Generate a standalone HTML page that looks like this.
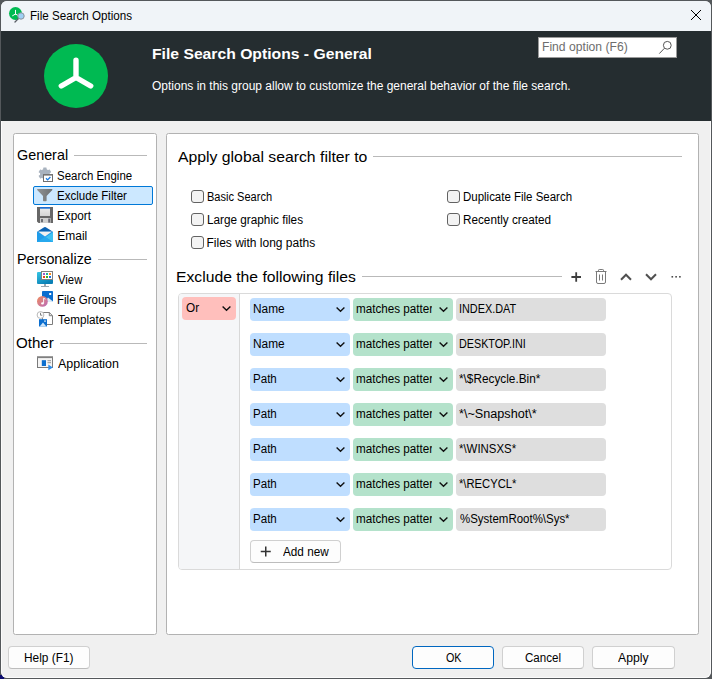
<!DOCTYPE html>
<html lang="en"><head><meta charset="utf-8"><title>File Search Options</title>
<style>
html,body{margin:0;padding:0}
body{width:712px;height:679px;position:relative;overflow:hidden;background:#54585b;font-family:'Liberation Sans',sans-serif;font-size:12px;color:#000}
.a{position:absolute;box-sizing:border-box}
.t{position:absolute;white-space:pre;line-height:20px;transform-origin:0 0;display:block}
.win{left:1px;top:1px;width:710px;height:677px;border-radius:6px;overflow:hidden;background:#f0f0f0}
.titlebar{left:0;top:0;width:710px;height:30px;background:#f0f4f8}
.header{left:0;top:30px;width:710px;height:90px;background:#252d30}
.panel{background:#fff;border:1px solid #b2b2b2;border-radius:2.5px}
.hr{height:1px;background:#b9b9b9}
.cb{width:13px;height:13px;border:1px solid #626262;border-radius:3px;background:#f3f3f3}
.btn{height:23px;border:1px solid #d0d0d0;border-bottom-color:#bdbdbd;border-radius:4px;background:#fdfdfd}
.fld{height:23px;border-radius:4px;overflow:hidden}
.sel{left:33px;top:186px;width:120px;height:19px;border:1px solid #0078d7;border-radius:2px;background:#cce8ff}
svg{position:absolute;overflow:visible}
</style></head><body>

<div class="a" style="left:0;top:675px;width:4px;height:4px;background:#0c0c6e"></div>
<div class="a win"><div class="a" style="left:-1px;top:-1px;width:712px;height:679px">
<div class="a titlebar" style="left:1px;top:1px"></div>
<div class="a header" style="left:1px;top:31px"></div>
<div class="a" style="left:1px;top:121px;width:710px;height:557px;border:1px solid #fbfbfb;border-top:none;border-radius:0 0 6px 6px"></div>
<svg style="left:8px;top:6px" width="18" height="18" viewBox="0 0 18 18">
<circle cx="7.5" cy="7.5" r="6.5" fill="#00ba52"/>
<g stroke="#fff" stroke-width="1" stroke-linecap="round" fill="none"><path d="M7.5 4.3V8M7.5 8L4.6 9.7M7.5 8L10.4 9.7"/></g>
<path d="M10.6 12.4L7 16" stroke="#5a5f66" stroke-width="1.3" stroke-linecap="round"/>
<circle cx="13" cy="10" r="3.2" fill="#9fd0f5" stroke="#8a929c" stroke-width="1"/>
</svg>
<span class="t" style="left:29.53px;top:6px;font-size:12px;color:#000;transform:scaleX(0.9688);">File Search Options</span>
<svg style="left:691px;top:10px" width="10" height="10" viewBox="0 0 10 10"><path d="M0 0L10 10M10 0L0 10" stroke="#000" stroke-width="1" fill="none"/></svg>
<svg style="left:44px;top:44px" width="64" height="64" viewBox="0 0 64 64">
<circle cx="32" cy="32" r="32" fill="#00ba52"/>
<path d="M32 16.3V33.5M32 33.5L17.3 42M32 33.5L46.7 42" stroke="#fff" stroke-width="5.4" stroke-linecap="round" stroke-linejoin="round" fill="none"/>
</svg>
<span class="t" style="left:151.70px;top:44px;font-size:15px;color:#fff;transform:scaleX(1.0469);font-weight:700;">File Search Options - General</span>
<span class="t" style="left:152.00px;top:76px;font-size:12px;color:#fff;transform:scaleX(0.9994);">Options in this group allow to customize the general behavior of the file search.</span>
<div class="a" style="left:538px;top:37px;width:139px;height:21px;background:#fff;border:1px solid #9a9a9a"></div>
<span class="t" style="left:542.49px;top:37px;font-size:12px;color:#6d6d6d;transform:scaleX(1.0120);">Find option (F6)</span>
<svg style="left:658px;top:40px" width="16" height="16" viewBox="0 0 16 16"><circle cx="9.3" cy="5.3" r="3.9" fill="none" stroke="#555" stroke-width="1"/><path d="M6.5 8.2L1.3 13.6" stroke="#555" stroke-width="1" fill="none"/></svg>
<div class="a panel" style="left:13px;top:133px;width:144px;height:502px"></div>
<div class="a panel" style="left:166px;top:133px;width:533px;height:502px"></div>
<span class="t" style="left:16.51px;top:145px;font-size:14.5px;color:#000;transform:scaleX(0.9900);">General</span>
<div class="a hr" style="left:74px;top:155px;width:73px"></div>
<span class="t" style="left:16.51px;top:249px;font-size:14.5px;color:#000;transform:scaleX(0.9865);">Personalize</span>
<div class="a hr" style="left:98px;top:259px;width:49px"></div>
<span class="t" style="left:16.46px;top:333px;font-size:14.5px;color:#000;transform:scaleX(1.0429);">Other</span>
<div class="a hr" style="left:60px;top:343px;width:87px"></div>
<div class="a sel"></div>
<span class="t" style="left:57.30px;top:166px;font-size:12px;color:#000;transform:scaleX(0.9545);">Search Engine</span>
<span class="t" style="left:57.29px;top:186px;font-size:12px;color:#000;transform:scaleX(0.9618);">Exclude Filter</span>
<span class="t" style="left:57.27px;top:206px;font-size:12px;color:#000;transform:scaleX(0.9779);">Export</span>
<span class="t" style="left:57.25px;top:226px;font-size:12px;color:#000;transform:scaleX(1.0000);">Email</span>
<span class="t" style="left:58.25px;top:270px;font-size:12px;color:#000;transform:scaleX(0.9423);">View</span>
<span class="t" style="left:57.29px;top:290px;font-size:12px;color:#000;transform:scaleX(0.9590);">File Groups</span>
<span class="t" style="left:58.25px;top:310px;font-size:12px;color:#000;transform:scaleX(0.9722);">Templates</span>
<span class="t" style="left:58.25px;top:354px;font-size:12px;color:#000;transform:scaleX(1.0388);">Application</span>
<svg style="left:0;top:0" width="160" height="380" viewBox="0 0 160 380">
<defs>
<linearGradient id="gfun" x1="0" y1="0" x2="1" y2="0"><stop offset="0" stop-color="#8f9294"/><stop offset="1" stop-color="#6e7173"/></linearGradient>
<linearGradient id="gmon" x1="0" y1="0" x2="0.6" y2="1"><stop offset="0" stop-color="#35c6e4"/><stop offset="1" stop-color="#0a7fb5"/></linearGradient>
<linearGradient id="gnote" x1="0" y1="0" x2="1" y2="1"><stop offset="0" stop-color="#f08c5c"/><stop offset="1" stop-color="#b96bbd"/></linearGradient>
<linearGradient id="glab" x1="0" y1="0" x2="0" y2="1"><stop offset="0" stop-color="#eeeeee"/><stop offset="1" stop-color="#d4d4d4"/></linearGradient>
</defs>
<!-- search engine: gear + window with check -->
<g fill="#a9b3bf">
<circle cx="44.9" cy="174" r="4.9"/>
<g transform="translate(44.9 174)">
<rect x="-1.7" y="-6.4" width="3.4" height="12.8" rx="0.5"/>
<rect x="-1.7" y="-6.4" width="3.4" height="12.8" rx="0.5" transform="rotate(60)"/>
<rect x="-1.7" y="-6.4" width="3.4" height="12.8" rx="0.5" transform="rotate(120)"/>
</g></g>
<rect x="43.5" y="174.5" width="9" height="7" fill="#fff" stroke="#6e6e6e" stroke-width="1"/>
<rect x="43" y="174" width="10" height="1.6" fill="#757575"/>
<path d="M46 178.3L47.6 179.9L50.4 177" stroke="#1a7be0" stroke-width="1.3" fill="none"/>
<!-- funnel -->
<path d="M37.2 189H52.3V189.9L46.6 196V200.6Q46.6 201.2 46 201.2H43.6Q43 201.2 43 200.6V196L37.2 189.9Z" fill="url(#gfun)"/>
<!-- floppy -->
<path d="M37 207H53V223H38.6L37 221.4Z" fill="#676767"/>
<rect x="40" y="207" width="10" height="9" fill="url(#glab)"/>
<rect x="40" y="207" width="10" height="1.7" fill="#1d6fd3"/>
<rect x="40" y="218" width="10.6" height="5" fill="#cfcfcf"/>
<rect x="41.2" y="219" width="1.6" height="3.2" fill="#55585f"/>
<rect x="48.3" y="218.6" width="1.6" height="4" fill="#5a5c68"/>
<!-- email -->
<path d="M37 231.8L44.2 227.3Q45 226.8 45.8 227.3L53 231.8Z" fill="#0c63b4"/>
<rect x="37" y="231.8" width="16" height="10.2" fill="#1f9cea"/>
<path d="M53 232.3L45.4 237.3L53 242Z" fill="#3fc1f2"/>
<path d="M37 242L45 236.8L53 242Z" fill="#27a9ee"/>
<path d="M38.3 231.8H51.7L45 236.6Z" fill="#f1f1f1"/>
<!-- view -->
<rect x="37" y="272" width="16" height="12" rx="1" fill="url(#gmon)"/>
<rect x="44" y="284" width="2" height="2" fill="#9aa7b0"/>
<rect x="41" y="286" width="8" height="1" fill="#9aa7b0"/>
<rect x="41.5" y="271.5" width="11" height="8" fill="#fff" stroke="#808080" stroke-width="1"/>
<rect x="43" y="273" width="2" height="2" fill="#9a5bd0"/><rect x="46" y="273" width="2" height="2" fill="#1fb39a"/><rect x="49" y="273" width="2" height="2" fill="#ff8a18"/>
<rect x="43" y="276" width="2" height="2" fill="#e8431b"/><rect x="46" y="276" width="2" height="2" fill="#3bb61f"/><rect x="49" y="276" width="2" height="2" fill="#1a72e8"/>
<!-- file groups -->
<rect x="42" y="291" width="11" height="11" rx="0.8" fill="#0b6ecf"/>
<rect x="49.2" y="293" width="2" height="2" fill="#fff"/>
<path d="M45 302L48 297.6L53 301.6V302Z" fill="#dcebf8"/>
<circle cx="42.4" cy="301.4" r="5.4" fill="url(#gnote)"/>
<path d="M43.6 298.2V303.2" stroke="#fff" stroke-width="0.9" fill="none"/>
<path d="M43.6 298.2L45.4 299.2" stroke="#fff" stroke-width="0.9" fill="none"/>
<ellipse cx="42.5" cy="303.4" rx="1.4" ry="1.1" fill="#fff"/>
<!-- templates -->
<path d="M42.5 312.5H49.3L52.5 315.7V324.5H42.5Z" fill="#fff" stroke="#7c7c7c" stroke-width="1"/>
<path d="M49.3 312.5V315.7H52.5" fill="none" stroke="#7c7c7c" stroke-width="1"/>
<circle cx="40.5" cy="315" r="3.4" fill="#fff" stroke="#b8b8b8" stroke-width="1"/>
<path d="M40.5 312.8V315.2H42.3" fill="none" stroke="#777" stroke-width="0.9"/>
<rect x="39" y="319.2" width="8" height="7.3" fill="#0b6ecf"/>
<path d="M39.6 326.5L43 322.6L46.4 326.5Z" fill="#cfe5f8"/>
<rect x="44.3" y="320.4" width="1.4" height="1.4" fill="#fff"/>
<!-- application -->
<rect x="37.5" y="357" width="15" height="10.5" fill="#f5f5f5" stroke="#7a7a7a" stroke-width="1"/>
<rect x="37" y="356.5" width="16" height="1.6" fill="#808080"/>
<rect x="41.8" y="360.2" width="4.2" height="5.8" fill="#0b6ecf"/>
<path d="M47.5 360.7H51M47.5 362.7H51" stroke="#8a8a8a" stroke-width="0.9"/>
<path d="M48.3 364.6L52.9 367.4L48.3 370.3Z" fill="#2d8cea"/>
</svg>

<span class="t" style="left:177.50px;top:147px;font-size:15px;color:#000;transform:scaleX(1.0514);">Apply global search filter to</span>
<div class="a hr" style="left:373px;top:156px;width:309px"></div>
<span class="t" style="left:176.45px;top:267px;font-size:15px;color:#000;transform:scaleX(1.0471);">Exclude the following files</span>
<div class="a hr" style="left:362px;top:276px;width:200px"></div>
<div class="a cb" style="left:191px;top:190px"></div>
<span class="t" style="left:206.58px;top:187px;font-size:12px;color:#000;transform:scaleX(0.9203);">Basic Search</span>
<div class="a cb" style="left:191px;top:213px"></div>
<span class="t" style="left:206.52px;top:210px;font-size:12px;color:#000;transform:scaleX(0.9794);">Large graphic files</span>
<div class="a cb" style="left:191px;top:236px"></div>
<span class="t" style="left:206.50px;top:233px;font-size:12px;color:#000;transform:scaleX(1.0000);">Files with long paths</span>
<div class="a cb" style="left:447px;top:190px"></div>
<span class="t" style="left:462.54px;top:187px;font-size:12px;color:#000;transform:scaleX(0.9558);">Duplicate File Search</span>
<div class="a cb" style="left:447px;top:213px"></div>
<span class="t" style="left:462.52px;top:210px;font-size:12px;color:#000;transform:scaleX(0.9773);">Recently created</span>
<svg style="left:566px;top:267px" width="120" height="20" viewBox="566 267 120 20" fill="none">
<path d="M576.2 272.2V281.8M571.4 277H581" stroke="#3d3d3d" stroke-width="1.8"/>
<g stroke="#7a7a7a" stroke-width="1"><path d="M595.5 271.5H606.5M598.5 271.3V270.2Q598.5 269.5 599.3 269.5H602.7Q603.5 269.5 603.5 270.2V271.3"/><path d="M596.5 271.8V282Q596.5 283.5 598 283.5H604Q605.5 283.5 605.5 282V271.8"/><path d="M599.5 274.5V280.5M602.5 274.5V280.5"/></g>
<path d="M621 279.7L626 274.7L631 279.7" stroke="#505050" stroke-width="2"/>
<path d="M646 274.3L651 279.3L656 274.3" stroke="#505050" stroke-width="2"/>
<g fill="#4a4a4a"><rect x="671.5" y="276" width="1.6" height="1.6"/><rect x="675.3" y="276" width="1.6" height="1.6"/><rect x="679.1" y="276" width="1.6" height="1.6"/></g>
</svg>
<div class="a" style="left:178px;top:293px;width:494px;height:277px;border:1px solid #dadada;border-radius:4px;background:#fff;overflow:hidden"><div class="a" style="left:0;top:0;width:61px;height:275px;background:#f5f6f8;border-right:1px solid #d8d8d8"></div></div>
<div class="a fld" style="left:182px;top:297px;width:54px;background:#ffbfbc"></div>
<span class="t" style="left:185.50px;top:298px;font-size:12px;color:#000;transform:scaleX(0.9808);">Or</span>
<svg style="left:221.7px;top:306px" width="9" height="5" viewBox="0 0 9 5"><path d="M0.6 0.5L4.5 4.3L8.4 0.5" stroke="#111" stroke-width="1.4" fill="none"/></svg>
<div class="a fld" style="left:250px;top:298px;width:100px;background:#bfdeff"></div>
<div class="a fld" style="left:353px;top:298px;width:100px;background:#b4e2cb"></div>
<div class="a fld" style="left:456px;top:298px;width:150px;background:#dedede"></div>
<span class="t" style="left:253.11px;top:299px;font-size:12px;color:#000;transform:scaleX(0.9887);">Name</span>
<svg style="left:335.6px;top:307px" width="9" height="5" viewBox="0 0 9 5"><path d="M0.6 0.5L4.5 4.3L8.4 0.5" stroke="#111" stroke-width="1.4" fill="none"/></svg>
<div class="a" style="left:353px;top:298px;width:79px;height:23px;overflow:hidden"><span class="t" style="left:2.78px;top:1px;transform:scaleX(0.9730)">matches pattern</span></div>
<svg style="left:439px;top:307px" width="9" height="5" viewBox="0 0 9 5"><path d="M0.6 0.5L4.5 4.3L8.4 0.5" stroke="#111" stroke-width="1.4" fill="none"/></svg>
<span class="t" style="left:458.94px;top:299px;font-size:12px;color:#000;transform:scaleX(0.9056);">INDEX.DAT</span>
<div class="a fld" style="left:250px;top:333px;width:100px;background:#bfdeff"></div>
<div class="a fld" style="left:353px;top:333px;width:100px;background:#b4e2cb"></div>
<div class="a fld" style="left:456px;top:333px;width:150px;background:#dedede"></div>
<span class="t" style="left:253.11px;top:334px;font-size:12px;color:#000;transform:scaleX(0.9887);">Name</span>
<svg style="left:335.6px;top:342px" width="9" height="5" viewBox="0 0 9 5"><path d="M0.6 0.5L4.5 4.3L8.4 0.5" stroke="#111" stroke-width="1.4" fill="none"/></svg>
<div class="a" style="left:353px;top:333px;width:79px;height:23px;overflow:hidden"><span class="t" style="left:2.78px;top:1px;transform:scaleX(0.9730)">matches pattern</span></div>
<svg style="left:439px;top:342px" width="9" height="5" viewBox="0 0 9 5"><path d="M0.6 0.5L4.5 4.3L8.4 0.5" stroke="#111" stroke-width="1.4" fill="none"/></svg>
<span class="t" style="left:458.95px;top:334px;font-size:12px;color:#000;transform:scaleX(0.8979);">DESKTOP.INI</span>
<div class="a fld" style="left:250px;top:368px;width:100px;background:#bfdeff"></div>
<div class="a fld" style="left:353px;top:368px;width:100px;background:#b4e2cb"></div>
<div class="a fld" style="left:456px;top:368px;width:150px;background:#dedede"></div>
<span class="t" style="left:253.14px;top:369px;font-size:12px;color:#000;transform:scaleX(0.9630);">Path</span>
<svg style="left:335.6px;top:377px" width="9" height="5" viewBox="0 0 9 5"><path d="M0.6 0.5L4.5 4.3L8.4 0.5" stroke="#111" stroke-width="1.4" fill="none"/></svg>
<div class="a" style="left:353px;top:368px;width:79px;height:23px;overflow:hidden"><span class="t" style="left:2.78px;top:1px;transform:scaleX(0.9730)">matches pattern</span></div>
<svg style="left:439px;top:377px" width="9" height="5" viewBox="0 0 9 5"><path d="M0.6 0.5L4.5 4.3L8.4 0.5" stroke="#111" stroke-width="1.4" fill="none"/></svg>
<span class="t" style="left:458.87px;top:369px;font-size:12px;color:#000;transform:scaleX(0.9833);">*\$Recycle.Bin*</span>
<div class="a fld" style="left:250px;top:403px;width:100px;background:#bfdeff"></div>
<div class="a fld" style="left:353px;top:403px;width:100px;background:#b4e2cb"></div>
<div class="a fld" style="left:456px;top:403px;width:150px;background:#dedede"></div>
<span class="t" style="left:253.14px;top:404px;font-size:12px;color:#000;transform:scaleX(0.9630);">Path</span>
<svg style="left:335.6px;top:412px" width="9" height="5" viewBox="0 0 9 5"><path d="M0.6 0.5L4.5 4.3L8.4 0.5" stroke="#111" stroke-width="1.4" fill="none"/></svg>
<div class="a" style="left:353px;top:403px;width:79px;height:23px;overflow:hidden"><span class="t" style="left:2.78px;top:1px;transform:scaleX(0.9730)">matches pattern</span></div>
<svg style="left:439px;top:412px" width="9" height="5" viewBox="0 0 9 5"><path d="M0.6 0.5L4.5 4.3L8.4 0.5" stroke="#111" stroke-width="1.4" fill="none"/></svg>
<span class="t" style="left:458.80px;top:404px;font-size:12px;color:#000;transform:scaleX(1.0542);">*\~Snapshot\*</span>
<div class="a fld" style="left:250px;top:438px;width:100px;background:#bfdeff"></div>
<div class="a fld" style="left:353px;top:438px;width:100px;background:#b4e2cb"></div>
<div class="a fld" style="left:456px;top:438px;width:150px;background:#dedede"></div>
<span class="t" style="left:253.14px;top:439px;font-size:12px;color:#000;transform:scaleX(0.9630);">Path</span>
<svg style="left:335.6px;top:447px" width="9" height="5" viewBox="0 0 9 5"><path d="M0.6 0.5L4.5 4.3L8.4 0.5" stroke="#111" stroke-width="1.4" fill="none"/></svg>
<div class="a" style="left:353px;top:438px;width:79px;height:23px;overflow:hidden"><span class="t" style="left:2.78px;top:1px;transform:scaleX(0.9730)">matches pattern</span></div>
<svg style="left:439px;top:447px" width="9" height="5" viewBox="0 0 9 5"><path d="M0.6 0.5L4.5 4.3L8.4 0.5" stroke="#111" stroke-width="1.4" fill="none"/></svg>
<span class="t" style="left:458.90px;top:439px;font-size:12px;color:#000;transform:scaleX(0.9517);">*\WINSXS*</span>
<div class="a fld" style="left:250px;top:473px;width:100px;background:#bfdeff"></div>
<div class="a fld" style="left:353px;top:473px;width:100px;background:#b4e2cb"></div>
<div class="a fld" style="left:456px;top:473px;width:150px;background:#dedede"></div>
<span class="t" style="left:253.14px;top:474px;font-size:12px;color:#000;transform:scaleX(0.9630);">Path</span>
<svg style="left:335.6px;top:482px" width="9" height="5" viewBox="0 0 9 5"><path d="M0.6 0.5L4.5 4.3L8.4 0.5" stroke="#111" stroke-width="1.4" fill="none"/></svg>
<div class="a" style="left:353px;top:473px;width:79px;height:23px;overflow:hidden"><span class="t" style="left:2.78px;top:1px;transform:scaleX(0.9730)">matches pattern</span></div>
<svg style="left:439px;top:482px" width="9" height="5" viewBox="0 0 9 5"><path d="M0.6 0.5L4.5 4.3L8.4 0.5" stroke="#111" stroke-width="1.4" fill="none"/></svg>
<span class="t" style="left:458.91px;top:474px;font-size:12px;color:#000;transform:scaleX(0.9358);">*\RECYCL*</span>
<div class="a fld" style="left:250px;top:508px;width:100px;background:#bfdeff"></div>
<div class="a fld" style="left:353px;top:508px;width:100px;background:#b4e2cb"></div>
<div class="a fld" style="left:456px;top:508px;width:150px;background:#dedede"></div>
<span class="t" style="left:253.14px;top:509px;font-size:12px;color:#000;transform:scaleX(0.9630);">Path</span>
<svg style="left:335.6px;top:517px" width="9" height="5" viewBox="0 0 9 5"><path d="M0.6 0.5L4.5 4.3L8.4 0.5" stroke="#111" stroke-width="1.4" fill="none"/></svg>
<div class="a" style="left:353px;top:508px;width:79px;height:23px;overflow:hidden"><span class="t" style="left:2.78px;top:1px;transform:scaleX(0.9730)">matches pattern</span></div>
<svg style="left:439px;top:517px" width="9" height="5" viewBox="0 0 9 5"><path d="M0.6 0.5L4.5 4.3L8.4 0.5" stroke="#111" stroke-width="1.4" fill="none"/></svg>
<span class="t" style="left:459.85px;top:509px;font-size:12px;color:#000;transform:scaleX(0.9553);">%SystemRoot%\Sys*</span>
<div class="a btn" style="left:250px;top:540px;width:91px"></div>
<svg style="left:260px;top:546px" width="12" height="12" viewBox="0 0 12 12"><path d="M5.75 0.5V10.5M0.75 5.5H10.75" stroke="#333" stroke-width="1.5" fill="none"/></svg>
<span class="t" style="left:283.25px;top:542px;font-size:12px;color:#000;transform:scaleX(0.9787);">Add new</span>
<div class="a btn" style="left:8px;top:646px;width:82px"></div>
<span class="t" style="left:24.26px;top:648px;font-size:12px;color:#000;transform:scaleX(0.9896);">Help (F1)</span>
<div class="a btn" style="left:412px;top:646px;width:82px;border:1.5px solid #0067c0"></div>
<span class="t" style="left:445.50px;top:648px;font-size:12px;color:#000;transform:scaleX(0.8971);">OK</span>
<div class="a btn" style="left:502px;top:646px;width:82px"></div>
<span class="t" style="left:524.53px;top:648px;font-size:12px;color:#000;transform:scaleX(0.9653);">Cancel</span>
<div class="a btn" style="left:592px;top:646px;width:83px"></div>
<span class="t" style="left:618.25px;top:648px;font-size:12px;color:#000;transform:scaleX(1.0167);">Apply</span>
</div></div></body></html>
